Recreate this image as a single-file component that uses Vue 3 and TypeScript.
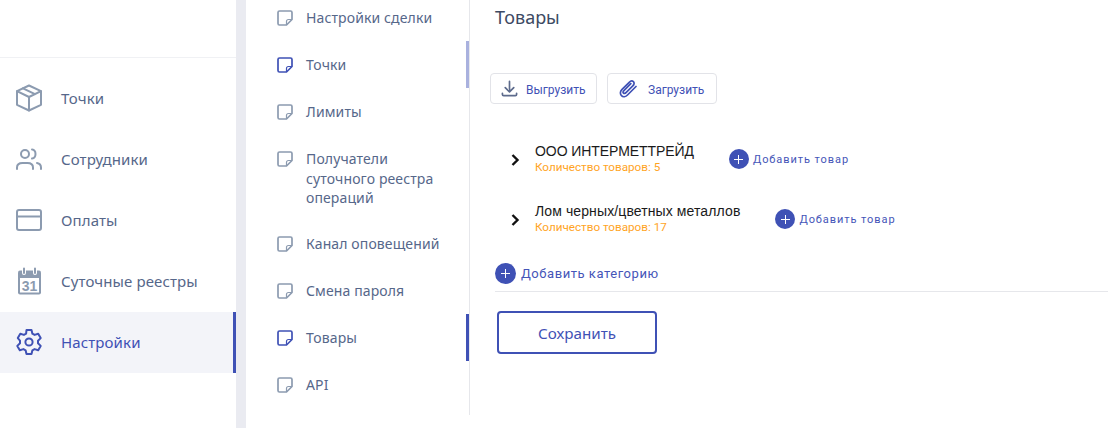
<script setup lang="ts">
const mainNav = [
  { label: 'Точки', icon: 'box' },
  { label: 'Сотрудники', icon: 'users' },
  { label: 'Оплаты', icon: 'card' },
  { label: 'Суточные реестры', icon: 'cal' },
  { label: 'Настройки', icon: 'gear', active: true },
]
const subNav = [
  { label: 'Настройки сделки' },
  { label: 'Точки', blue: true, hover: true },
  { label: 'Лимиты' },
  { label: 'Получатели суточного реестра операций', tall: true },
  { label: 'Канал оповещений' },
  { label: 'Смена пароля' },
  { label: 'Товары', blue: true, active: true },
  { label: 'API' },
]
const cats = [
  { name: 'ООО ИНТЕРМЕТТРЕЙД', count: 5, fit: 'tight' },
  { name: 'Лом черных/цветных металлов', count: 17, fit: 'wide' },
]
</script>

<template>
  <div class="page">
    <aside class="side">
      <div class="side-head"></div>
      <nav class="side-nav">
        <a v-for="n in mainNav" :key="n.label" class="side-item" :class="{ on: n.active }">
          <svg class="side-icon" width="28" height="28" viewBox="0 0 28 28" fill="none" stroke="currentColor" stroke-width="2" stroke-linejoin="round" stroke-linecap="round">
            <template v-if="n.icon === 'box'">
              <path d="M14 1.500 26 7.200v13.600L14 26.500 2 20.800V7.200z" />
              <path d="M2 7.200 14 13l12-5.800M14 13v13.500M8 4.300l12 5.800" />
            </template>
            <template v-else-if="n.icon === 'users'">
              <circle cx="10" cy="9" r="4" />
              <path d="M2 24v-1.500C2 19.500 4.500 18 7.500 18h5c3 0 5.500 1.500 5.500 4.500V24" />
              <path d="M17 4.500c2.200.3 3.500 2.200 3.500 4.500s-1.300 4.200-3.500 4.500M22 18c2.500.5 4 2 4 4.500V24" />
            </template>
            <template v-else-if="n.icon === 'card'">
              <rect x="2" y="4" width="24" height="20" rx="2" />
              <path d="M2 10.500h24" />
            </template>
            <template v-else-if="n.icon === 'cal'">
              <rect x="3" y="3.500" width="23" height="24" rx="2" stroke="none" fill="currentColor" />
              <rect x="5" y="11" width="19" height="14.500" stroke="none" fill="#fff" />
              <path d="M9 1.500V6M20 1.500V6" stroke="#fff" stroke-width="4" />
              <path d="M9 1.500V6M20 1.500V6" />
              <text x="14.500" y="24" class="cal-num">31</text>
            </template>
            <template v-else>
              <circle cx="14" cy="14" r="3.600" />
              <path d="M11.500 2h5l.9 3.700 2.200 1.200 3.600-1.100 2.500 4.300-2.700 2.600v2.600l2.700 2.600-2.500 4.300-3.600-1.100-2.200 1.200-.9 3.700h-5l-.9-3.700-2.200-1.200-3.600 1.100-2.500-4.300 2.700-2.600v-2.600L2.800 10.100l2.500-4.300 3.600 1.100 2.200-1.200z" />
            </template>
          </svg>
          <span>{{ n.label }}</span>
        </a>
      </nav>
    </aside>
    <div class="strip"></div>
    <nav class="sub">
      <a v-for="s in subNav" :key="s.label" class="sub-item" :class="{ tall: s.tall, blue: s.blue, act: s.active, hov: s.hover }">
        <svg class="note" width="16" height="16" viewBox="0 0 16 16" fill="none" stroke="currentColor" stroke-width="1.700" stroke-linejoin="round">
          <path d="M9.500 15H2.500A1.500 1.500 0 0 1 1 13.500v-11A1.500 1.500 0 0 1 2.500 1h11A1.500 1.500 0 0 1 15 2.500v7z" />
          <path d="M9.500 15v-3.500a2 2 0 0 1 2-2H15" stroke-width="1.200" />
        </svg>
        <span>{{ s.label }}</span>
      </a>
    </nav>
    <main class="main">
      <h1>Товары</h1>
      <div class="btns">
        <button class="tool down">
          <svg width="17" height="18" viewBox="0 0 18 18" fill="none" stroke="#5d6b8c" stroke-width="1.800" stroke-linecap="round" stroke-linejoin="round">
            <path d="M9 1v10.500M4.500 7.500 9 12l4.500-4.500M1.500 13.500v1.200c0 .9.700 1.300 1.300 1.300h12.400c.6 0 1.300-.4 1.300-1.300v-1.200" />
          </svg>
          <span>Выгрузить</span>
        </button>
        <button class="tool up">
          <svg width="20" height="20" viewBox="0 0 20 20" fill="none" stroke="#3f51b5" stroke-width="1.700" stroke-linecap="round">
            <path d="M18 7.500 9.500 16c-1.800 1.800-4.500 2.200-6 .7S2 12.500 3.800 10.700l7.400-7.400c1.300-1.300 3-1.700 4.200-.6s.7 3-.6 4.200L8 13.700c-.8.800-1.900 1-2.500.4s-.4-1.700.4-2.500L12.800 4.700" />
          </svg>
          <span>Загрузить</span>
        </button>
      </div>
      <div class="cats">
        <div v-for="c in cats" :key="c.name" class="cat">
          <svg class="chev" width="9" height="12" viewBox="0 0 9 12" fill="none" stroke="#111" stroke-width="2.400"><path d="M1.500 1 6.500 6l-5 5" /></svg>
          <div class="cat-text">
            <div class="cat-name" :class="c.fit">{{ c.name }}</div>
            <div class="cat-count">Количество товаров: {{ c.count }}</div>
          </div>
          <a class="add"><i class="plus small"></i><span>Добавить товар</span></a>
        </div>
      </div>
      <a class="add add-cat"><i class="plus"></i><span>Добавить категорию</span></a>
      <div class="rule"></div>
      <button class="save">Сохранить</button>
    </main>
  </div>
</template>

<style>
html, body { margin: 0; background: #fff; overflow: hidden; }
</style>

<style scoped>
.page { display: flex; width: 1108px; height: 428px; overflow: hidden; background: #fff; font-family: "Noto Sans", sans-serif; }
.side { width: 236px; flex: none; }
.side-head { height: 57px; border-bottom: 1px solid #f0f1f4; }
.side-nav { padding-top: 10px; display: flex; flex-direction: column; }
.side-item { height: 61px; display: flex; align-items: center; padding: 0 0 2px 15px; gap: 18px; color: #56678a; font-size: 15px; letter-spacing: .12px; box-sizing: border-box; }
.side-icon { color: #8c9bb0; flex: none; }
.side-item.on { background: #f3f4f9; border-right: 3px solid #3f51b5; color: #3f51b5; }
.side-item.on .side-icon { color: #3f51b5; }
.cal-num { font: 700 14px "Liberation Sans", sans-serif; fill: currentColor; stroke: none; text-anchor: middle; letter-spacing: 0; }
.strip { width: 10px; flex: none; background: #eaebf1; }
.sub { width: 224px; height: 421px; flex: none; box-sizing: border-box; border-right: 1px solid #e6e7eb; margin-top: -6px; display: flex; flex-direction: column; }
.sub-item { height: 47px; flex: none; display: flex; align-items: center; gap: 13px; padding-left: 31px; color: #56678a; font-size: 14px; letter-spacing: .12px; box-sizing: border-box; line-height: 19.500px; border-right: 3px solid transparent; }
.sub-item.tall { height: 85px; align-items: flex-start; padding-top: 14px; padding-right: 30px; }
.sub-item.tall .note { margin-top: 2px; }
.note { color: #8c9bb0; flex: none; }
.sub-item.blue .note { color: #3f51b5; }
.sub-item.hov { border-right-color: #a9b1de; }
.sub-item.act { border-right-color: #3f51b5; }
.main { flex: 1; min-width: 0; padding-left: 25px; position: relative; }
h1 { margin: 5px 0 0; font-size: 18px; font-weight: 400; color: #3d4a63; line-height: 24px; }
.btns { display: flex; gap: 10px; margin: 44px 0 0 -5px; }
.tool { height: 31px; box-sizing: border-box; display: flex; align-items: center; padding: 0 0 0 10px; background: #fff; border: 1px solid #e2e3e8; border-radius: 4px; font: 12px Roboto, sans-serif; color: #3f51b5; }
.tool span { padding-top: 2px; }
.tool.down { width: 107px; gap: 8px; }
.tool.up { width: 110px; gap: 10px; }
.cats { display: flex; flex-direction: column; gap: 26px; margin-top: 38px; }
.cat { display: flex; align-items: center; padding-left: 16px; height: 34px; }
.chev { flex: none; margin: 2px 15px 0 0; }
.cat-name { font: 14px/17px "Liberation Sans", sans-serif; color: #1a1a1a; }
.cat-name.tight { letter-spacing: -.07px; }
.cat-name.wide { letter-spacing: .11px; }
.cat-count { font: 11.700px/15px Roboto, sans-serif; color: #ffa41f; }
.add { display: flex; align-items: center; gap: 4px; font: 11px Roboto, sans-serif; letter-spacing: .93px; color: #4555b8; }
.cat .add { margin: 0 0 0 35px; }
.plus { width: 21px; height: 21px; border-radius: 50%; background: #3f51b5; position: relative; flex: none; display: block; }
.plus.small { width: 20px; height: 20px; }
.plus::before, .plus::after { content: ""; position: absolute; background: #fff; left: 50%; top: 50%; }
.plus::before { width: 9px; height: 1px; margin: -.5px 0 0 -4.500px; }
.plus::after { width: 1px; height: 9px; margin: -4.500px 0 0 -.5px; }
.add-cat { margin-top: 27px; font-size: 13px; gap: 5px; letter-spacing: .55px; }
.rule { height: 1px; background: #e6e7eb; margin-top: 7px; }
.save { display: block; width: 160px; height: 43px; margin: 19px 0 0 2px; background: #fff; border: 2px solid #3f51b5; border-radius: 4px; color: #3f51b5; font: 15.200px "Noto Sans", sans-serif; }
</style>
